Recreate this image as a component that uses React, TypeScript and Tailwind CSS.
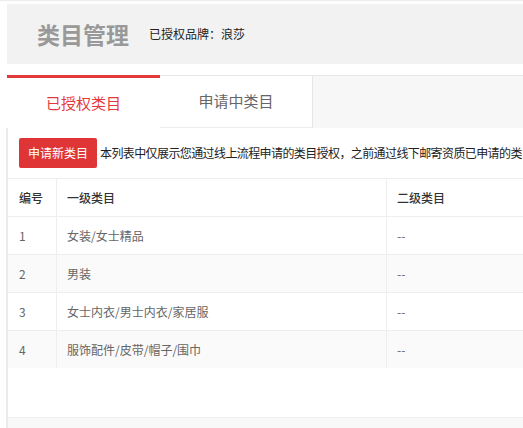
import React from "react";

const rows = [
  { id: "1", name: "女装/女士精品", sub: "--", bg: "bg-white" },
  { id: "2", name: "男装", sub: "--", bg: "bg-[#fafafa]" },
  { id: "3", name: "女士内衣/男士内衣/家居服", sub: "--", bg: "bg-white" },
  { id: "4", name: "服饰配件/皮带/帽子/围巾", sub: "--", bg: "bg-[#fafafa]" },
];

export default function App() {
  return (
    <div
      className="w-[523px] h-[428px] overflow-hidden bg-white flex flex-col"
      style={{ fontFamily: '"Noto Sans CJK SC", "Noto Sans", sans-serif' }}
    >
      <div className="h-px bg-[#ececec] shrink-0" />
      <div className="ml-[7px] mt-[3px] h-[60px] bg-[#f2f2f2] flex items-center pl-[30px] shrink-0">
        <span className="text-[23px] font-bold text-[#999] leading-none">类目管理</span>
        <span className="ml-[20px] text-[12px] text-[#222] leading-none">已授权品牌：浪莎</span>
      </div>
      <div className="ml-[7px] mt-[11px] h-[53px] bg-[#f7f7f7] border-t border-[#e6e6e6] flex shrink-0">
        <div className="w-[153px] -mt-px bg-white border-t-[3px] border-[#e4393c] flex items-center justify-center text-[15px] text-[#e4393c]">
          已授权类目
        </div>
        <div className="w-[153px] bg-white border-r border-[#e6e6e6] border-b border-b-[#ececec] flex items-center justify-center text-[15px] text-[#666]">
          申请中类目
        </div>
      </div>
      <div className="ml-[6px] border-l-2 border-[#ebebeb] flex-1 flex flex-col min-h-0">
        <div className="flex items-center pt-[10px] pl-[11px] h-[40px] shrink-0 overflow-hidden">
          <button className="h-[30px] w-[78px] shrink-0 rounded-[2px] bg-[#e03536] text-white text-[12px] flex items-center justify-center">
            申请新类目
          </button>
          <span className="ml-[3px] text-[12px] tracking-[-0.6px] text-[#222] whitespace-nowrap">
            本列表中仅展示您通过线上流程申请的类目授权，之前通过线下邮寄资质已申请的类
          </span>
        </div>
        <div className="mt-[10px] border-t border-[#eeeeee] shrink-0">
          <div className="flex h-[37px] items-center text-[12px] text-[#333] font-medium">
            <div className="w-[49px] h-full flex items-center pl-[11px] border-r border-[#eeeeee]">编号</div>
            <div className="w-[330px] h-full flex items-center pl-[10px] border-r border-[#eeeeee]">一级类目</div>
            <div className="flex-1 h-full flex items-center pl-[10px]">二级类目</div>
          </div>
          {rows.map((r) => (
            <div key={r.id} className={`flex h-[38px] items-center text-[12px] text-[#666] border-t border-[#eeeeee] ${r.bg}`}>
              <div className="w-[49px] h-full flex items-center pl-[11px] border-r border-[#eeeeee]">{r.id}</div>
              <div className="w-[330px] h-full flex items-center pl-[10px] border-r border-[#eeeeee]">{r.name}</div>
              <div className="flex-1 h-full flex items-center pl-[10px]">{r.sub}</div>
            </div>
          ))}
        </div>
        <div className="h-[49px] shrink-0 bg-white" />
        <div className="flex-1 bg-[#f8f8f8] border-t border-[#eeeeee]" />
      </div>
    </div>
  );
}
